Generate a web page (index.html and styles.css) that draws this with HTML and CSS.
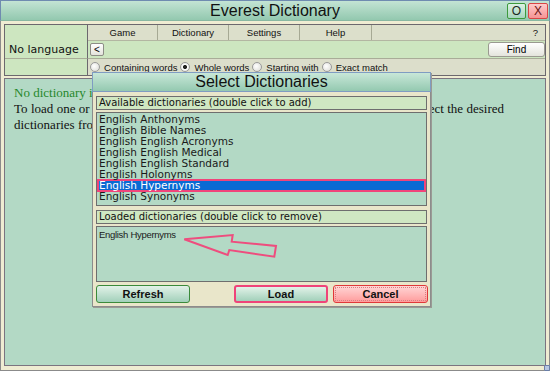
FILE: index.html
```html
<!DOCTYPE html>
<html lang="en">

<head>
    <meta charset="UTF-8">
    <meta name="viewport" content="width=device-width, initial-scale=1.0">
    <title>Everest Dictionary</title>
    <link rel="stylesheet" href="styles.css">
</head>

<body>

    <div class="window">

        <div class="titlebar">
            <div></div>
            <div class="title">Everest Dictionary</div>
            <div class="title-buttons">
                <button class="tb-btn tb-restore">O</button>
                <button class="tb-btn tb-close">X</button>
            </div>
        </div>

        <div class="toolbar">
            <div class="lang">No language</div>
            <div class="menu">
                <div class="menu-item">Game</div>
                <div class="menu-item">Dictionary</div>
                <div class="menu-item">Settings</div>
                <div class="menu-item">Help</div>
                <div class="menu-rest">?</div>
            </div>
            <div class="search">
                <button class="back">&lt;</button>
                <button class="find">Find</button>
            </div>
            <div class="lang-blank"></div>
            <div class="modes">
                <span class="radio"></span><span class="mode"><u>C</u>ontaining words</span>
                <span class="radio checked"></span><span class="mode"><u>W</u>hole words</span>
                <span class="radio"></span><span class="mode"><u>S</u>tarting with</span>
                <span class="radio"></span><span class="mode"><u>E</u>xact match</span>
            </div>
        </div>

        <div class="content">
            <p class="notice">No dictionary is loaded.</p>
            <p class="help">To load one or more dictionaries, please go to the Dictionary menu and then select the desired
                dictionaries from the list.</p>
        </div>

        <div class="grip"></div>

        <!-- Select Dictionaries dialog -->
        <div class="dialog">
            <div class="dlg-title">Select Dictionaries</div>
            <div class="dlg-body">
                <div class="dlg-label">Available dictionaries (double click to add)</div>
                <div class="dlg-list available">
                    <div class="item">English Anthonyms</div>
                    <div class="item">English Bible Names</div>
                    <div class="item">English English Acronyms</div>
                    <div class="item">English English Medical</div>
                    <div class="item">English English Standard</div>
                    <div class="item">English Holonyms</div>
                    <div class="item selected">English Hypernyms</div>
                    <div class="item">English Synonyms</div>
                </div>
                <div class="dlg-label loaded-label">Loaded dictionaries (double click to remove)</div>
                <div class="dlg-list loaded">
                    <div class="item">English Hypernyms</div>
                </div>
                <div class="dlg-buttons">
                    <button class="btn btn-refresh">Refresh</button>
                    <button class="btn btn-load">Load</button>
                    <button class="btn btn-cancel">Cancel</button>
                </div>
            </div>
            <svg class="arrow" width="200" height="200" viewBox="0 0 200 200">
                <polygon points="92.3,167.3 140.7,163 139.7,169.7 184,174 182.3,184.7 137.3,178 135.7,183"
                    fill="none" stroke="#ee4d7e" stroke-width="2" />
            </svg>
        </div>

    </div>

</body>

</html>
```

FILE: styles.css
```css
* {
    margin: 0;
    padding: 0;
    box-sizing: border-box;
}

body {
    width: 550px;
    height: 371px;
    overflow: hidden;
    font-family: "Liberation Sans", Arial, sans-serif;
    color: #111;
}

.window {
    position: relative;
    width: 550px;
    height: 371px;
    background-color: #efecd2;
    border: solid 1px #8b8b8b;
    border-top: none;
}

/* title bar */

.titlebar {
    display: grid;
    grid-template-columns: 1fr auto 1fr;
    align-items: center;
    height: 21px;
    margin: 0 -1px;
    border: solid 1px #6f8bb0;
    border-bottom-color: #88b8a2;
    background: linear-gradient(#c3e4d4, #93c8af);
}

.title {
    font-size: 16px;
    color: #111;
    line-height: 19px;
}

.title-buttons {
    display: flex;
    justify-content: flex-end;
    gap: 2px;
    padding-right: 1px;
}

.tb-btn {
    height: 16px;
    font-family: "Liberation Sans", Arial, sans-serif;
    font-size: 12px;
    line-height: 14px;
    border-radius: 2px;
}

.tb-restore {
    width: 19px;
    border: solid 1px #3d9a3d;
    background: linear-gradient(#dcf1e3, #a7d5bd);
    color: #1b2a22;
}

.tb-close {
    width: 20px;
    border: solid 1px #d94545;
    background: linear-gradient(#ffcaca, #f59494);
    color: #6a1414;
}

/* toolbar */

.toolbar {
    display: grid;
    grid-template-columns: 83px 1fr;
    grid-template-rows: 16px 18px 16px;
    margin: 3px 3px 0;
    border: solid 1px #6c686e;
}

.lang {
    grid-row: 1 / 3;
    display: flex;
    align-items: flex-end;
    padding: 0 0 1px 4px;
    background-color: #cde6c0;
    border-right: solid 1px #6c686e;
    border-bottom: solid 1px #a9ac98;
    font-family: "DejaVu Sans", Verdana, sans-serif;
    font-size: 11px;
    line-height: 14px;
}

.lang-blank {
    background-color: #cde6c0;
    border-right: solid 1px #6c686e;
}

.menu {
    display: flex;
    background-color: #dcdfcb;
    border-bottom: solid 1px #b3b6a2;
    font-size: 9.5px;
    line-height: 15px;
}

.menu-item {
    width: 71px;
    text-align: center;
    border-right: solid 1px #a6a994;
}

.menu-item:first-child {
    width: 70px;
}

.menu-item:nth-child(4) {
    width: 72px;
}

.menu-rest {
    flex: 1;
    text-align: right;
    padding-right: 7px;
}

.search {
    display: flex;
    justify-content: space-between;
    align-items: center;
    padding: 0 0 0 2px;
    background-color: #cde6c0;
    border-bottom: solid 1px #a9ac98;
}

.back {
    width: 14px;
    height: 13px;
    border: solid 1px #8d8d86;
    border-radius: 2px;
    background: linear-gradient(#ffffff, #e3e3db);
    font-family: "Liberation Sans", Arial, sans-serif;
    font-size: 10px;
    line-height: 10px;
}

.find {
    width: 57px;
    height: 15px;
    border: solid 1px #9a9a90;
    border-radius: 3px;
    background: linear-gradient(#ffffff, #e4e4dc);
    font-family: "Liberation Sans", Arial, sans-serif;
    font-size: 10px;
    line-height: 12px;
}

.modes {
    display: flex;
    align-items: center;
    padding-left: 2px;
    background-color: #dcdecb;
    font-size: 9.5px;
}

.radio {
    width: 10px;
    height: 10px;
    margin-right: 4px;
    border-radius: 50%;
    border: solid 1px #9a9a9a;
    background: radial-gradient(circle at 40% 40%, #ffffff, #d9d9d3);
}

.radio.checked {
    background: radial-gradient(circle, #222 0 1.8px, #ffffff 2.3px, #d9d9d3);
}

.mode {
    margin-right: 3px;
}

/* main area */

.content {
    height: 288px;
    margin: 2px 3px 0;
    padding: 6px 9px;
    background-color: #b3d9c5;
    border: solid 1px #7b7480;
    font-family: "Liberation Serif", "Times New Roman", serif;
    font-size: 13px;
    line-height: 16px;
    color: #111;
}

.content .notice {
    color: #26882c;
}

.content .help {
    max-width: 490px;
    text-align: justify;
}

.grip {
    position: absolute;
    right: -1px;
    bottom: -1px;
    width: 6px;
    height: 6px;
    border: solid 1px #6a7fa8;
    border-radius: 1px;
    background: #b7c6e2;
}

/* dialog */

.dialog {
    position: absolute;
    left: 91px;
    top: 72px;
    width: 339px;
    height: 235px;
    box-shadow: 1px 1px 0 #9a9a94;
}

.dlg-title {
    height: 20px;
    border: solid 1px #7f9cc2;
    background: linear-gradient(#c8e7d8, #94c9b0);
    text-align: center;
    font-size: 16px;
    line-height: 18px;
}

.dlg-body {
    height: 215px;
    padding: 4px 3px 3px;
    background-color: #e9e6ca;
    border: solid 1px #8c8c8c;
    border-top: none;
}

.dlg-label {
    height: 14px;
    padding-left: 2px;
    border: solid 1px #6e6e6e;
    background-color: #cfe7c2;
    font-family: "DejaVu Sans", Verdana, sans-serif;
    font-size: 10px;
    line-height: 12px;
}

.dlg-list {
    margin-top: 2px;
    padding: 1px 0 0 1px;
    border: solid 1px #6e6e6e;
    background-color: #b3d9c5;
    font-family: "DejaVu Sans", Verdana, sans-serif;
    font-size: 10.5px;
    line-height: 11px;
}

.dlg-list.available {
    height: 94px;
}

.dlg-list .item {
    padding-left: 1px;
    color: #1a1a1a;
}

.dlg-list .item.selected {
    margin: -1px 0 -1px -1px;
    padding: 1px 0 1px 2px;
    background-color: #0a6ad3;
    color: #fff;
    box-shadow: inset 0 0 0 2px #f0447a;
}

.loaded-label {
    margin-top: 4px;
}

.dlg-list.loaded {
    height: 56px;
    padding-top: 2px;
    font-family: "Liberation Sans", Arial, sans-serif;
    font-size: 9.5px;
    letter-spacing: -0.3px;
}

.dlg-buttons {
    display: flex;
    gap: 5px;
    margin-top: 3px;
}

.btn {
    width: 94px;
    height: 18px;
    border-radius: 3px;
    font-family: "Liberation Sans", Arial, sans-serif;
    font-size: 11px;
    font-weight: bold;
    color: #111;
}

.btn-refresh {
    border: solid 1px #3a8a3a;
    background: linear-gradient(#e2f2e8, #a2d0ba);
}

.btn-load {
    margin-left: auto;
    border: solid 2px #ef4379;
    background: linear-gradient(#e2f2e8, #a2d0ba);
}

.btn-cancel {
    width: 95px;
    margin-right: -1px;
    border: solid 1px #e03838;
    background: linear-gradient(#ffd6d6, #ff9c9c);
    outline: dotted 1px #d98080;
    outline-offset: -3px;
}

.arrow {
    position: absolute;
    left: 0;
    top: 0;
    pointer-events: none;
}
```
